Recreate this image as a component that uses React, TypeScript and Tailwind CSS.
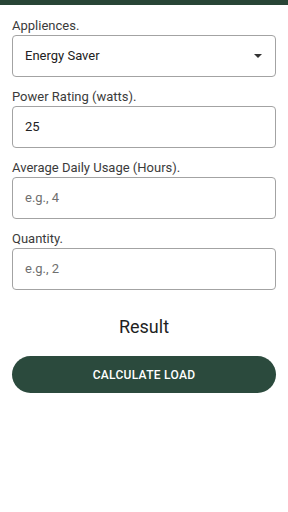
import React from "react";

type FieldProps = {
  label: string;
  children: React.ReactNode;
};

function Field({ label, children }: FieldProps) {
  return (
    <div className="flex flex-col">
      <label className="mb-px text-[13px] leading-4 text-[#3b3b3b]">{label}</label>
      {children}
    </div>
  );
}

function TextBox({ value, placeholder }: { value?: string; placeholder?: string }) {
  return (
    <div className="flex h-[42px] items-center rounded-[4px] border border-[#a3a3a3] px-3 text-[13px]">
      {value ? (
        <span className="text-[#222222]">{value}</span>
      ) : (
        <span className="text-[#6f6f6f]">{placeholder}</span>
      )}
    </div>
  );
}

export default function App() {
  return (
    <div
      className="min-h-[512px] w-[288px] bg-white"
      style={{ fontFamily: "Roboto, 'Liberation Sans', sans-serif" }}
    >
      <div className="h-[5px] bg-[#284536]" />
      <div className="flex flex-col px-3 pt-[13px]">
        <div className="flex flex-col gap-3">
          <Field label="Appliences.">
            <div className="flex h-[42px] items-center justify-between rounded-[4px] border border-[#a3a3a3] pl-3 pr-[13px] text-[13px] text-[#222222]">
              <span>Energy Saver</span>
              <svg width="8" height="4" viewBox="0 0 8 4">
                <path d="M0 0 L8 0 L4 4 Z" fill="#333333" />
              </svg>
            </div>
          </Field>
          <Field label="Power Rating (watts).">
            <TextBox value="25" />
          </Field>
          <Field label="Average Daily Usage (Hours).">
            <TextBox placeholder="e.g., 4" />
          </Field>
          <Field label="Quantity.">
            <TextBox placeholder="e.g., 2" />
          </Field>
        </div>
        <p className="mt-[25px] text-center text-[18px] leading-6 text-[#1f1f1f]">Result</p>
        <button className="mt-[17px] flex h-[37px] items-center justify-center rounded-full bg-[#2b4a3d] text-[12px] font-medium tracking-[0.3px] text-white">
          CALCULATE LOAD
        </button>
      </div>
    </div>
  );
}
